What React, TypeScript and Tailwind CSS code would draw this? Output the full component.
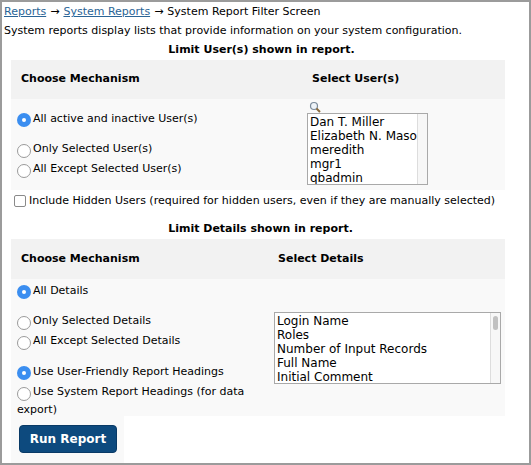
import React from "react";

function Radio({ checked }: { checked?: boolean }) {
  return checked ? (
    <span className="inline-flex w-[14px] h-[14px] rounded-full bg-[#3b8ef0] items-center justify-center shrink-0 mt-[2px]">
      <span className="w-[4px] h-[4px] rounded-full bg-white" />
    </span>
  ) : (
    <span className="inline-block w-[14px] h-[14px] rounded-full border border-[#9a9a9a] bg-white shrink-0 mt-[3px]" />
  );
}

function Opt({ checked, label }: { checked?: boolean; label: string }) {
  return (
    <div className="flex items-start gap-[2px] leading-[16px]">
      <Radio checked={checked} />
      <span>{label}</span>
    </div>
  );
}

function ListBox({ items, className }: { items: string[]; className: string }) {
  return (
    <div className={"border border-[#a9a9a9] bg-white flex " + className}>
      <div className="flex-1 pl-[2px] pt-[1px] leading-[14px] overflow-hidden whitespace-nowrap">
        {items.map((i) => (
          <div key={i}>{i}</div>
        ))}
      </div>
      <div className="w-[10px] border-l border-[#ddd] bg-[#f7f7f7] relative">
        {className.includes("thumb") && <div className="absolute top-[3px] left-[2px] w-[5px] h-[14px] rounded bg-[#c1c1c1]" />}
      </div>
    </div>
  );
}

export default function App() {
  return (
    <div
      className="w-[531px] h-[465px] border-2 border-[#9b9b9b] bg-white text-[11px] text-black overflow-hidden"
      style={{ fontFamily: "'DejaVu Sans', Verdana, sans-serif" }}
    >
      <div className="pl-[2px] pt-[1px]">
        <div className="h-[19px] flex items-center">
          <a className="text-[#2a6496] underline">Reports</a>
          <span className="mx-[4px]">→</span>
          <a className="text-[#2a6496] underline">System Reports</a>
          <span className="mx-[4px]">→</span>
          <span>System Report Filter Screen</span>
        </div>
        <div className="h-[19px] flex items-center">System reports display lists that provide information on your system configuration.</div>
        <div className="h-[19px] flex items-center justify-center font-bold pr-[10px]">Limit User(s) shown in report.</div>
      </div>
      <div className="ml-[9px] w-[494px] bg-[#f9f9f9]">
        <div className="h-[39px] bg-[#f2f2f2] flex items-center font-bold">
          <div className="w-[301px] pl-[10px]">Choose Mechanism</div>
          <div>Select User(s)</div>
        </div>
        <div className="flex h-[91px]">
          <div className="w-[296px] pl-[6px] pt-[12px]">
            <Opt checked label="All active and inactive User(s)" />
            <div className="mt-[14px]" />
            <Opt label="Only Selected User(s)" />
            <div className="mt-[3px]" />
            <Opt label="All Except Selected User(s)" />
          </div>
          <div className="pt-[2px]">
            <svg width="12" height="12" viewBox="0 0 12 12" className="ml-[2px]">
              <circle cx="5" cy="5" r="3.5" fill="#eef3f8" stroke="#7a8a9a" strokeWidth="1.2" />
              <path d="M7.5 7.5 L11 11" stroke="#8a6a3a" strokeWidth="2" />
            </svg>
            <ListBox className="w-[121px] h-[72px] text-[12px]" items={["Dan T. Miller", "Elizabeth N. Mason", "meredith", "mgr1", "qbadmin"]} />
          </div>
        </div>
      </div>
      <div className="pl-[12px] h-[22px] flex items-center gap-[3px]">
        <span className="w-[12px] h-[12px] border border-[#8a8a8a] rounded-[2px] bg-white" />
        <span>Include Hidden Users (required for hidden users, even if they are manually selected)</span>
      </div>
      <div className="h-[19px] mt-[8px] flex items-center justify-center font-bold pr-[10px]">Limit Details shown in report.</div>
      <div className="ml-[9px] w-[494px] bg-[#f9f9f9]">
        <div className="h-[40px] bg-[#f2f2f2] flex items-center font-bold">
          <div className="w-[267px] pl-[10px]">Choose Mechanism</div>
          <div>Select Details</div>
        </div>
        <div className="flex h-[137px]">
          <div className="w-[263px] pl-[6px] pt-[4px]">
            <Opt checked label="All Details" />
            <div className="mt-[14px]" />
            <Opt label="Only Selected Details" />
            <div className="mt-[3px]" />
            <Opt label="All Except Selected Details" />
            <div className="mt-[14px]" />
            <Opt checked label="Use User-Friendly Report Headings" />
            <div className="mt-[3px]" />
            <div className="relative pl-[16px] leading-[18px]">
              <span className="absolute left-0 top-[1px]"><Radio /></span>
              Use System Report Headings (for data
              <div className="-ml-[16px]">export)</div>
            </div>
          </div>
          <div className="pt-[33px]">
            <ListBox className="w-[227px] h-[72px] text-[12px] thumb" items={["Login Name", "Roles", "Number of Input Records", "Full Name", "Initial Comment"]} />
          </div>
        </div>
      </div>
      <div className="ml-[9px] w-[113px] h-[52px] bg-[#f9f9f9] pt-[9px] pl-[8px]">
        <button className="w-[98px] h-[28px] rounded-[4px] bg-[#0d4a7e] text-white font-bold text-[12px] border border-[#093a66]">Run Report</button>
      </div>
    </div>
  );
}
